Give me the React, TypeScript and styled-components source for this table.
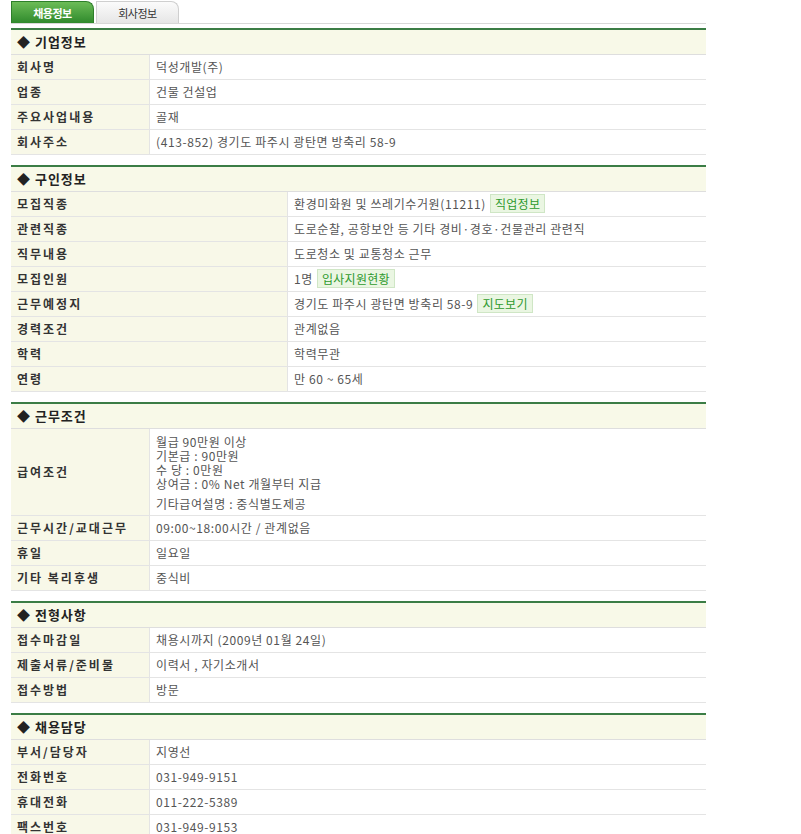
import React from "react";
import styled, { createGlobalStyle } from "styled-components";

const Global = createGlobalStyle`
  html, body { margin: 0; padding: 0; background: #fff; }
  body { font-family: "Noto Sans CJK KR", "Noto Sans", sans-serif; font-size: 12px; color: #555; }
`;

const Page = styled.div`
  width: 695px;
  padding: 0 0 0 11px;
`;

const TabBar = styled.div`
  display: flex;
  gap: 2px;
  height: 23px;
  border-bottom: 1px solid #d8d8d8;
  align-items: flex-end;
`;

const Tab = styled.div<{ $active?: boolean }>`
  width: 83px;
  height: 22px;
  box-sizing: border-box;
  display: flex;
  align-items: center;
  justify-content: center;
  font-size: 11px;
  letter-spacing: -0.5px;
  border-radius: 0 8px 0 0;
  ${(p) =>
    p.$active
      ? `background: linear-gradient(#6cbc57, #2f8a2c);
         color: #fff; font-weight: bold; border: 1px solid #2e7f2a; border-bottom: none;`
      : `background: linear-gradient(#fbfbfb, #e6e6e6);
         color: #333; border: 1px solid #cfcfcf; border-bottom: none;`}
`;

const SectionBox = styled.section<{ $first?: boolean }>`
  margin-top: ${(p) => (p.$first ? "4px" : "10px")};
  border-top: 2px solid #3b7d45;
`;

const Header = styled.div`
  height: 25px;
  box-sizing: border-box;
  background: #f8f9e8;
  border-bottom: 1px solid #dedede;
  display: flex;
  align-items: center;
  padding: 0 0 2px 6px;
  font-size: 13px;
  font-weight: bold;
  color: #222;
  letter-spacing: 1px;
`;

const Row = styled.div<{ $label: number }>`
  display: grid;
  grid-template-columns: ${(p) => p.$label}px 1fr;
  border-bottom: 1px solid #e4e4e4;
  min-height: 24px;
`;

const Label = styled.div`
  background: #f8f8e8;
  border-right: 1px solid #e4e4e4;
  display: flex;
  align-items: center;
  padding: 0 0 2px 6px;
  font-weight: bold;
  color: #333;
  font-size: 12px;
  letter-spacing: 2px;
`;

const Value = styled.div`
  display: flex;
  align-items: center;
  padding: 0 0 2px 6px;
  color: #555;
  font-size: 12px;
  letter-spacing: 0.6px;
  gap: 4px;
`;

const Multi = styled.div`
  padding: 6px 6px 4px 6px;
  color: #555;
  font-size: 12px;
  line-height: 14px;
  letter-spacing: 0.6px;
`;

const Extra = styled.div`
  margin-top: 6px;
`;

const Badge = styled.span`
  display: inline-flex;
  align-items: center;
  height: 17px;
  padding: 0 4px;
  background: #eaf6e2;
  border: 1px solid #cfe6c5;
  color: #2e9a2e;
  font-size: 12px;
  letter-spacing: 0.3px;
`;

type R = { k: string; v: React.ReactNode };

const Section = ({ title, label, rows, first }: { title: string; label: number; rows: R[]; first?: boolean }) => (
  <SectionBox $first={first}>
    <Header>◆ {title}</Header>
    {rows.map((r) => (
      <Row key={r.k} $label={label}>
        <Label>{r.k}</Label>
        {r.v}
      </Row>
    ))}
  </SectionBox>
);

const V = ({ children }: { children: React.ReactNode }) => <Value>{children}</Value>;

export default function App() {
  return (
    <Page>
      <Global />
      <TabBar>
        <Tab $active>채용정보</Tab>
        <Tab>회사정보</Tab>
      </TabBar>
      <Section
        first
        title="기업정보"
        label={139}
        rows={[
          { k: "회사명", v: <V>덕성개발(주)</V> },
          { k: "업종", v: <V>건물 건설업</V> },
          { k: "주요사업내용", v: <V>골재</V> },
          { k: "회사주소", v: <V>(413-852) 경기도 파주시 광탄면 방축리 58-9</V> },
        ]}
      />
      <Section
        title="구인정보"
        label={277}
        rows={[
          { k: "모집직종", v: <V>환경미화원 및 쓰레기수거원(11211) <Badge>직업정보</Badge></V> },
          { k: "관련직종", v: <V>도로순찰, 공항보안 등 기타 경비·경호·건물관리 관련직</V> },
          { k: "직무내용", v: <V>도로청소 및 교통청소 근무</V> },
          { k: "모집인원", v: <V>1명 <Badge>입사지원현황</Badge></V> },
          { k: "근무예정지", v: <V>경기도 파주시 광탄면 방축리 58-9 <Badge>지도보기</Badge></V> },
          { k: "경력조건", v: <V>관계없음</V> },
          { k: "학력", v: <V>학력무관</V> },
          { k: "연령", v: <V>만 60 ~ 65세</V> },
        ]}
      />
      <Section
        title="근무조건"
        label={139}
        rows={[
          {
            k: "급여조건",
            v: (
              <Multi>
                <div>월급 90만원 이상</div>
                <div>기본급 : 90만원</div>
                <div>수 당 : 0만원</div>
                <div>상여금 : 0% Net 개월부터 지급</div>
                <Extra>기타급여설명 : 중식별도제공</Extra>
              </Multi>
            ),
          },
          { k: "근무시간/교대근무", v: <V>09:00~18:00시간 / 관계없음</V> },
          { k: "휴일", v: <V>일요일</V> },
          { k: "기타 복리후생", v: <V>중식비</V> },
        ]}
      />
      <Section
        title="전형사항"
        label={139}
        rows={[
          { k: "접수마감일", v: <V>채용시까지 (2009년 01월 24일)</V> },
          { k: "제출서류/준비물", v: <V>이력서 , 자기소개서</V> },
          { k: "접수방법", v: <V>방문</V> },
        ]}
      />
      <Section
        title="채용담당"
        label={139}
        rows={[
          { k: "부서/담당자", v: <V>지영선</V> },
          { k: "전화번호", v: <V>031-949-9151</V> },
          { k: "휴대전화", v: <V>011-222-5389</V> },
          { k: "팩스번호", v: <V>031-949-9153</V> },
        ]}
      />
    </Page>
  );
}
